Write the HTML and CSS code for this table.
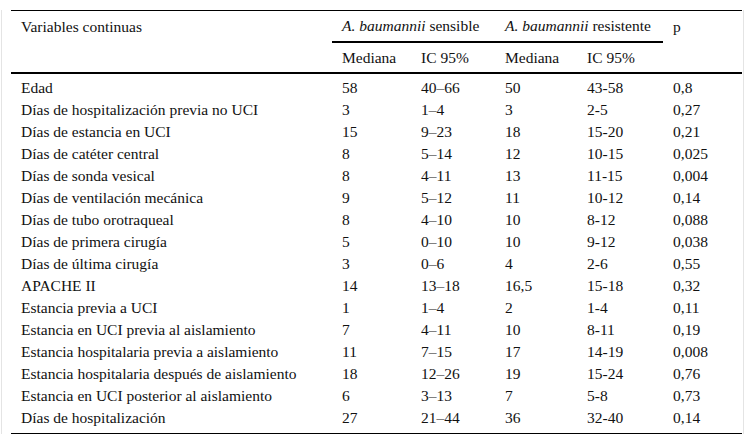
FILE: index.html
```html
<!DOCTYPE html>
<html lang="es">
<head>
<meta charset="utf-8">
<title>Variables continuas</title>
<link rel="stylesheet" href="styles.css">
</head>
<body>
<div class="frame">
<table class="tbl">
<colgroup>
<col class="c1"><col class="c2"><col class="c3"><col class="c4"><col class="c5"><col class="c6">
</colgroup>
<thead>
<tr class="h1">
<th rowspan="2" class="top">Variables continuas</th>
<th colspan="2" class="grp"><i>A. baumannii</i> sensible</th>
<th colspan="2" class="grp"><i>A. baumannii</i> resistente</th>
<th rowspan="2" class="top">p</th>
</tr>
<tr class="h2">
<th>Mediana</th><th>IC 95%</th><th>Mediana</th><th>IC 95%</th>
</tr>
</thead>
<tbody>
<tr><td>Edad</td><td>58</td><td>40–66</td><td>50</td><td>43-58</td><td>0,8</td></tr>
<tr><td>Días de hospitalización previa no UCI</td><td>3</td><td>1–4</td><td>3</td><td>2-5</td><td>0,27</td></tr>
<tr><td>Días de estancia en UCI</td><td>15</td><td>9–23</td><td>18</td><td>15-20</td><td>0,21</td></tr>
<tr><td>Días de catéter central</td><td>8</td><td>5–14</td><td>12</td><td>10-15</td><td>0,025</td></tr>
<tr><td>Días de sonda vesical</td><td>8</td><td>4–11</td><td>13</td><td>11-15</td><td>0,004</td></tr>
<tr><td>Días de ventilación mecánica</td><td>9</td><td>5–12</td><td>11</td><td>10-12</td><td>0,14</td></tr>
<tr><td>Días de tubo orotraqueal</td><td>8</td><td>4–10</td><td>10</td><td>8-12</td><td>0,088</td></tr>
<tr><td>Días de primera cirugía</td><td>5</td><td>0–10</td><td>10</td><td>9-12</td><td>0,038</td></tr>
<tr><td>Días de última cirugía</td><td>3</td><td>0–6</td><td>4</td><td>2-6</td><td>0,55</td></tr>
<tr><td>APACHE II</td><td>14</td><td>13–18</td><td>16,5</td><td>15-18</td><td>0,32</td></tr>
<tr><td>Estancia previa a UCI</td><td>1</td><td>1–4</td><td>2</td><td>1-4</td><td>0,11</td></tr>
<tr><td>Estancia en UCI previa al aislamiento</td><td>7</td><td>4–11</td><td>10</td><td>8-11</td><td>0,19</td></tr>
<tr><td>Estancia hospitalaria previa a aislamiento</td><td>11</td><td>7–15</td><td>17</td><td>14-19</td><td>0,008</td></tr>
<tr><td>Estancia hospitalaria después de aislamiento</td><td>18</td><td>12–26</td><td>19</td><td>15-24</td><td>0,76</td></tr>
<tr><td>Estancia en UCI posterior al aislamiento</td><td>6</td><td>3–13</td><td>7</td><td>5-8</td><td>0,73</td></tr>
<tr><td>Días de hospitalización</td><td>27</td><td>21–44</td><td>36</td><td>32-40</td><td>0,14</td></tr>
</tbody>
</table>
</div>
</body>
</html>
```
FILE: styles.css
```css
html, body {
  margin: 0;
  padding: 0;
  background: #fff;
}
body {
  padding-top: 10px;
  font-family: "Liberation Serif", Tinos, "Times New Roman", serif;
  font-size: 15.5px;
  color: #111;
}
.frame {
  margin-left: 1px;
  padding-left: 9px;
  border-left: 1px solid #e4e4e4;
  border-right: 1px solid #e4e4e4;
  box-sizing: border-box;
  width: 743px;
}
.tbl {
  width: 731px;
  border-collapse: collapse;
  table-layout: fixed;
  border-top: 1px solid #000;
  border-bottom: 1.5px solid #000;
  font-family: inherit;
  font-size: inherit;
}
.c1 { width: 321px; }
.c2 { width: 79px; }
.c3 { width: 84px; }
.c4 { width: 82px; }
.c5 { width: 86px; }
.c6 { width: 79px; }
th, td {
  padding: 0 0 0 10px;
  text-align: left;
  font-weight: normal;
  white-space: nowrap;
}
th.top {
  vertical-align: top;
  padding-top: 7px;
}
.h1 th.grp {
  height: 30px;
  vertical-align: middle;
  border-bottom: 2px solid #000;
}
.h2 th {
  height: 29px;
  vertical-align: middle;
}
thead {
  border-bottom: 2px solid #000;
}
tbody td {
  height: 22px;
  line-height: 18px;
  vertical-align: middle;
}
tbody tr:first-child td {
  padding-top: 3px;
}
tbody tr:last-child td {
  padding-bottom: 4px;
}
```
